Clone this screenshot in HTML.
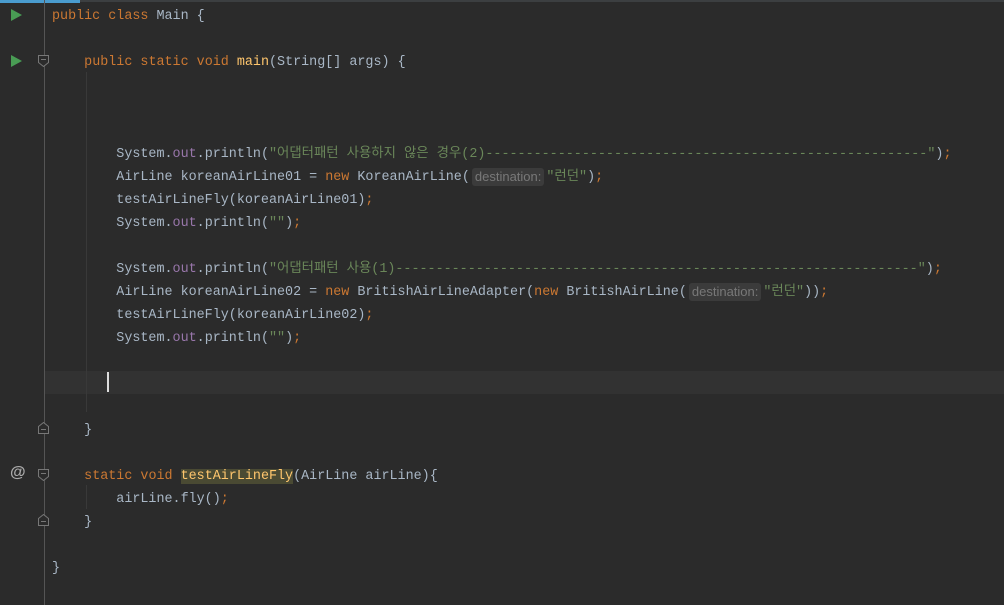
<!DOCTYPE html>
<html><head><meta charset="utf-8"><style>
body{margin:0;width:1004px;height:605px;background:#2b2b2b;overflow:hidden;position:relative;font-family:"Liberation Mono","Noto Sans CJK KR",monospace;font-size:13.4px;color:#a9b7c6}
.l{position:absolute;left:52px;height:23px;line-height:23px;white-space:pre}
.k{color:#cc7832}.s{color:#6a8759}.f{color:#9876aa}.m{color:#ffc66d}
.h{display:inline-block;line-height:18px;vertical-align:top;margin-top:2px;font-family:"Liberation Sans",sans-serif;font-size:13px;color:#787878;background:#3b3b3b;border-radius:3px;padding:0 3px;margin-left:2px;margin-right:2px}
.run{position:absolute;left:11px;width:0;height:0;border-top:6px solid transparent;border-bottom:6px solid transparent;border-left:11px solid #499c54}
.fold{position:absolute;left:38px;width:11px;height:12px}
</style></head><body>
<div style="position:absolute;left:0;top:0;width:80px;height:3px;background:#4a9ccf"></div>
<div style="position:absolute;left:80px;top:0;width:924px;height:2px;background:#3c3f41"></div>
<div style="position:absolute;left:44px;top:0;width:1px;height:605px;background:#555"></div>
<div style="position:absolute;left:45px;top:371px;width:959px;height:23px;background:#323232"></div>
<div style="position:absolute;left:86px;top:72px;width:1px;height:340px;background:#393939"></div>
<div style="position:absolute;left:86px;top:485px;width:1px;height:24px;background:#393939"></div>
<div class="run" style="top:9px"></div>
<div class="run" style="top:55px"></div>
<div style="position:absolute;left:10px;top:464px;color:#aaa;font-family:'Liberation Sans',sans-serif;font-weight:bold;font-size:16px">@</div>
<svg class="fold" style="top:55px" viewBox="0 0 11 12"><path d="M0.5 0.5H10.5V7.5L5.5 11.5L0.5 7.5Z M3 4.5H8" fill="#2b2b2b" stroke="#777"/></svg>
<svg class="fold" style="top:422px" viewBox="0 0 11 12"><path d="M0.5 11.5H10.5V4.5L5.5 0.5L0.5 4.5Z M3 7.5H8" fill="#2b2b2b" stroke="#777"/></svg>
<svg class="fold" style="top:469px" viewBox="0 0 11 12"><path d="M0.5 0.5H10.5V7.5L5.5 11.5L0.5 7.5Z M3 4.5H8" fill="#2b2b2b" stroke="#777"/></svg>
<svg class="fold" style="top:514px" viewBox="0 0 11 12"><path d="M0.5 11.5H10.5V4.5L5.5 0.5L0.5 4.5Z M3 7.5H8" fill="#2b2b2b" stroke="#777"/></svg>
<div class="l" style="top:5px"><span class="k">public class </span>Main {</div>
<div class="l" style="top:51px">    <span class="k">public static void </span><span class="m">main</span>(String[] args) {</div>
<div class="l" style="top:143px">        System.<span class="f">out</span>.println(<span class="s">"어댑터패턴 사용하지 않은 경우(2)-------------------------------------------------------"</span>)<span class="k">;</span></div>
<div class="l" style="top:166px">        AirLine koreanAirLine01 = <span class="k">new </span>KoreanAirLine(<span class="h">destination:</span><span class="s">"런던"</span>)<span class="k">;</span></div>
<div class="l" style="top:189px">        testAirLineFly(koreanAirLine01)<span class="k">;</span></div>
<div class="l" style="top:212px">        System.<span class="f">out</span>.println(<span class="s">""</span>)<span class="k">;</span></div>
<div class="l" style="top:258px">        System.<span class="f">out</span>.println(<span class="s">"어댑터패턴 사용(1)-----------------------------------------------------------------"</span>)<span class="k">;</span></div>
<div class="l" style="top:281px">        AirLine koreanAirLine02 = <span class="k">new </span>BritishAirLineAdapter(<span class="k">new </span>BritishAirLine(<span class="h">destination:</span><span class="s">"런던"</span>))<span class="k">;</span></div>
<div class="l" style="top:304px">        testAirLineFly(koreanAirLine02)<span class="k">;</span></div>
<div class="l" style="top:327px">        System.<span class="f">out</span>.println(<span class="s">""</span>)<span class="k">;</span></div>
<div style="position:absolute;left:107px;top:372px;width:2px;height:20px;background:#ddd"></div>
<div class="l" style="top:419px">    }</div>
<div class="l" style="top:465px">    <span class="k">static void </span><span class="m" style="background:#4a4a33">testAirLineFly</span>(AirLine airLine){</div>
<div class="l" style="top:488px">        airLine.fly()<span class="k">;</span></div>
<div class="l" style="top:511px">    }</div>
<div class="l" style="top:557px">}</div>
</body></html>
